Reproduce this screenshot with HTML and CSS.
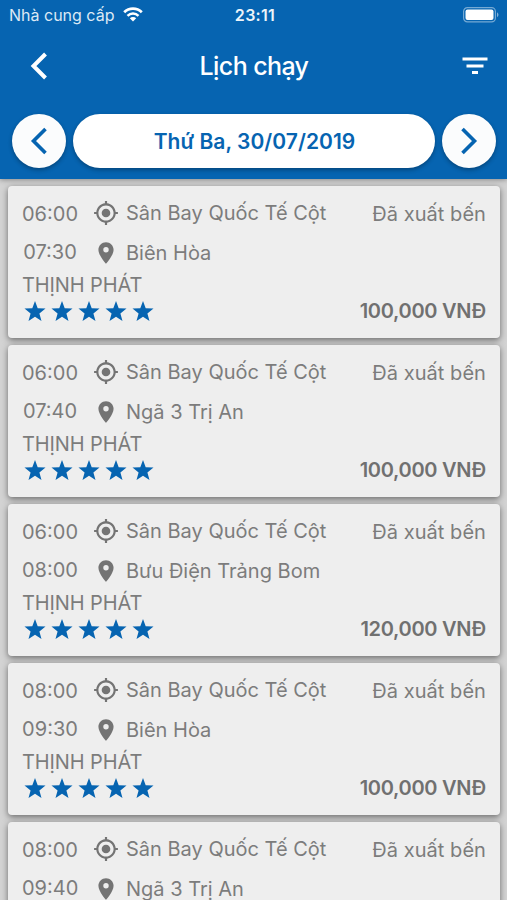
FILE: index.html
```html
<!DOCTYPE html>
<html lang="vi">
<head>
<meta charset="utf-8">
<title>Lịch chạy</title>
<link rel="stylesheet" href="styles.css">
</head>
<body>
<svg class="defs" aria-hidden="true">
  <symbol id="gps" viewBox="0 0 24 24"><path d="M12 8c-2.210 0-4 1.790-4 4s1.790 4 4 4 4-1.790 4-4-1.790-4-4-4zm8.940 3c-.46-4.170-3.770-7.480-7.940-7.940V1h-2v2.060C6.830 3.520 3.520 6.830 3.060 11H1v2h2.060c.46 4.170 3.770 7.480 7.940 7.940V23h2v-2.060c4.170-.46 7.480-3.770 7.940-7.940H23v-2h-2.060zM12 19c-3.870 0-7-3.130-7-7s3.130-7 7-7 7 3.130 7 7-3.130 7-7 7z"/></symbol>
  <symbol id="pin" viewBox="0 0 24 24"><path d="M12 2C8.130 2 5 5.130 5 9c0 5.250 7 13 7 13s7-7.750 7-13c0-3.870-3.130-7-7-7zm0 9.500a2.500 2.500 0 0 1 0-5 2.500 2.500 0 0 1 0 5z"/></symbol>
  <symbol id="stars" viewBox="0 0 130 20">
    <path id="star" d="M11 0l2.700 7.300 7.800.3-6.100 4.800 2.100 7.600L11 15.700 4.500 20l2.100-7.600L.5 7.600l7.800-.3z"/>
    <use href="#star" x="27"/><use href="#star" x="54"/><use href="#star" x="81"/><use href="#star" x="108"/>
  </symbol>
</svg>
<div class="app">
  <header class="header">
    <div class="status">
      <div class="carrier"><span>Nhà cung cấp</span>
        <svg class="wifi" viewBox="0 0 20 15"><path d="M1.200 5.300a12.400 12.400 0 0 1 17.600 0" fill="none" stroke="#fff" stroke-width="2.700"/><path d="M4.500 8.800a7.800 7.800 0 0 1 11 0" fill="none" stroke="#fff" stroke-width="2.500"/><path d="M10 14.500l-3.200-3.200a4.500 4.500 0 0 1 6.400 0z" fill="#fff"/></svg>
      </div>
      <div class="clock">23:11</div>
      <svg class="battery" viewBox="0 0 36 16"><rect x=".6" y=".6" width="31.800" height="14.300" rx="3.800" fill="none" stroke="#fff" stroke-opacity=".45" stroke-width="1.200"/><rect x="2.500" y="2.500" width="28" height="10.500" rx="2" fill="#fff"/><path d="M34 5.200q3 2.500 0 5z" fill="#fff" fill-opacity=".5"/></svg>
    </div>
    <div class="nav">
      <svg class="back" viewBox="0 0 18 28"><path d="M15.500 2L3.500 14l12 12" fill="none" stroke="#fff" stroke-width="4"/></svg>
      <h1>Lịch chạy</h1>
      <svg class="filter" viewBox="0 0 26 18"><path d="M.5 2h25M4.500 9h17M10 15.500h6" fill="none" stroke="#fff" stroke-width="2.800"/></svg>
    </div>
    <div class="dates">
      <div class="round"><svg viewBox="0 0 18 28"><path d="M15.500 2L3.500 14l12 12" fill="none" stroke="#0664b1" stroke-width="3.600"/></svg></div>
      <div class="date">Thứ Ba, 30/07/2019</div>
      <div class="round"><svg viewBox="0 0 18 28"><path d="M2.500 2l12 12-12 12" fill="none" stroke="#0664b1" stroke-width="3.600"/></svg></div>
    </div>
  </header>
  <main class="list">
    <article class="card">
      <div class="row"><span class="time start">06:00</span><svg class="icon"><use href="#gps"/></svg><span class="place">Sân Bay Quốc Tế Cột</span><span class="state">Đã xuất bến</span></div>
      <div class="row stop"><span class="time">07:30</span><svg class="icon"><use href="#pin"/></svg><span class="place">Biên Hòa</span></div>
      <div class="company">THỊNH PHÁT</div>
      <div class="foot"><svg class="stars"><use href="#stars"/></svg><span class="price">100,000 VNĐ</span></div>
    </article>
    <article class="card">
      <div class="row"><span class="time start">06:00</span><svg class="icon"><use href="#gps"/></svg><span class="place">Sân Bay Quốc Tế Cột</span><span class="state">Đã xuất bến</span></div>
      <div class="row stop"><span class="time">07:40</span><svg class="icon"><use href="#pin"/></svg><span class="place">Ngã 3 Trị An</span></div>
      <div class="company">THỊNH PHÁT</div>
      <div class="foot"><svg class="stars"><use href="#stars"/></svg><span class="price">100,000 VNĐ</span></div>
    </article>
    <article class="card">
      <div class="row"><span class="time start">06:00</span><svg class="icon"><use href="#gps"/></svg><span class="place">Sân Bay Quốc Tế Cột</span><span class="state">Đã xuất bến</span></div>
      <div class="row stop"><span class="time">08:00</span><svg class="icon"><use href="#pin"/></svg><span class="place">Bưu Điện Trảng Bom</span></div>
      <div class="company">THỊNH PHÁT</div>
      <div class="foot"><svg class="stars"><use href="#stars"/></svg><span class="price">120,000 VNĐ</span></div>
    </article>
    <article class="card">
      <div class="row"><span class="time start">08:00</span><svg class="icon"><use href="#gps"/></svg><span class="place">Sân Bay Quốc Tế Cột</span><span class="state">Đã xuất bến</span></div>
      <div class="row stop"><span class="time">09:30</span><svg class="icon"><use href="#pin"/></svg><span class="place">Biên Hòa</span></div>
      <div class="company">THỊNH PHÁT</div>
      <div class="foot"><svg class="stars"><use href="#stars"/></svg><span class="price">100,000 VNĐ</span></div>
    </article>
    <article class="card">
      <div class="row"><span class="time start">08:00</span><svg class="icon"><use href="#gps"/></svg><span class="place">Sân Bay Quốc Tế Cột</span><span class="state">Đã xuất bến</span></div>
      <div class="row stop"><span class="time">09:40</span><svg class="icon"><use href="#pin"/></svg><span class="place">Ngã 3 Trị An</span></div>
    </article>
  </main>
</div>
</body>
</html>
```
FILE: styles.css
```css
* { box-sizing: border-box; }
body { margin: 0; font-family: Inter, "Liberation Sans", sans-serif; }
svg { display: block; flex: none; }
.defs { position: absolute; width: 0; height: 0; }
.app { height: 900px; overflow: hidden; display: flex; flex-direction: column; background: #d3d3d3; }
.header { flex: none; height: 179px; background: #0664b1; color: #fff; box-shadow: 0 1px 5px rgba(0, 0, 0, .35); z-index: 1; }
.status { height: 30px; padding: 0 8px 0 9px; display: grid; grid-template-columns: 1fr auto 1fr; align-items: center; }
.carrier { display: flex; align-items: center; gap: 9px; font-size: 16px; line-height: 30px; color: #dce9f5; white-space: nowrap; }
.wifi { width: 20px; height: 15px; margin-top: -2px; }
.clock { font-size: 16px; font-weight: 600; letter-spacing: .3px; padding-left: 2px; color: #edf4fa; }
.battery { width: 36px; height: 16px; justify-self: end; }
.nav { height: 72px; padding: 0 19px 0 30px; display: grid; grid-template-columns: 1fr auto 1fr; align-items: center; }
.back { width: 18px; height: 28px; }
.nav h1 { margin: 0 0 0 -10px; font-size: 25px; line-height: 30px; font-weight: 500; letter-spacing: -.6px; }
.filter { width: 26px; height: 18px; justify-self: end; }
.dates { display: flex; gap: 7px; padding: 12px 11px 0 12px; }
.round { flex: none; width: 54px; height: 54px; border-radius: 50%; display: flex; align-items: center; justify-content: center; background: #fbfcfd; box-shadow: 0 2px 4px rgba(0, 0, 0, .3); }
.round svg { width: 18px; height: 28px; }
.date { flex: 1; height: 54px; padding-left: 1px; border-radius: 27px; background: #fff; color: #0664b1; text-align: center; font-size: 21px; line-height: 55px; font-weight: 600; letter-spacing: .04px; white-space: nowrap; box-shadow: 0 2px 4px rgba(0, 0, 0, .3); }
.list { flex: 1; padding: 7px 7px 0 8px; display: flex; flex-direction: column; gap: 7.100px; }
.card { flex: none; height: 152px; padding: 15px 14px 0; background: #eee; color: #7c7c7c; border-radius: 4px; box-shadow: 0 2px 6px rgba(0, 0, 0, .5); font-size: 20px; line-height: 24px; white-space: nowrap; }
.row { height: 39px; display: flex; align-items: flex-start; }
.time { width: 56px; margin-right: 15px; text-align: center; }
.start, .state { padding-top: 1px; }
.icon { width: 26px; height: 26px; margin: -1px 8px 0 0; fill: #747474; }
.stop .icon { margin-top: 0; }
.place { flex: 1; margin-left: -1px; }
.stop .place { padding-top: 1px; }
.state { letter-spacing: .05px; }
.company { height: 25px; margin-top: -6px; letter-spacing: -.1px; }
.foot { display: flex; justify-content: space-between; align-items: center; height: 26px; }
.stars { width: 130px; height: 20px; margin-left: 2px; fill: #0664b1; }
.price { font-weight: 600; color: #707070; letter-spacing: -.3px; }
```
